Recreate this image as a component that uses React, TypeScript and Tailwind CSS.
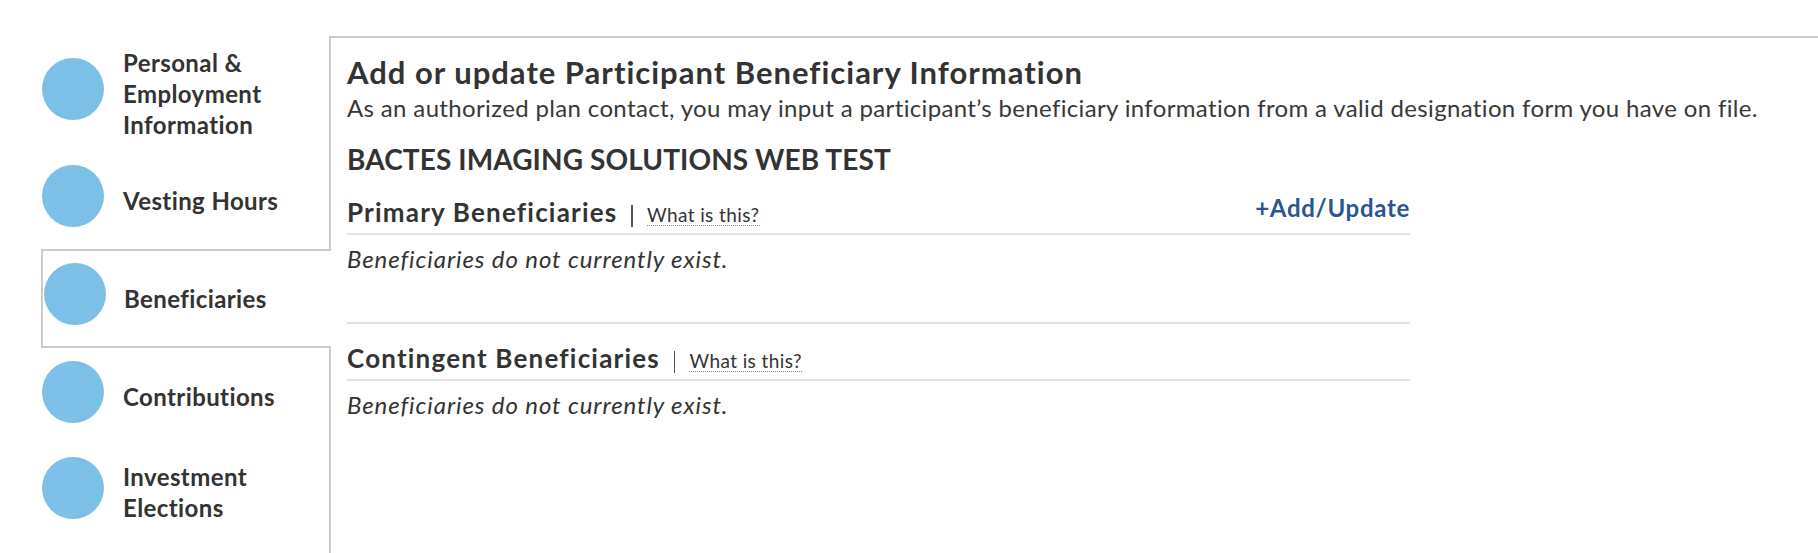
import React from "react";

function Circle({ extra = "" }: { extra?: string }) {
  return <div className={`w-[62px] h-[62px] rounded-full bg-[#7cc0e8] shrink-0 ${extra}`} />;
}

function SectionHeader({ title, showAdd }: { title: string; showAdd?: boolean }) {
  return (
    <div className="flex items-end justify-between pb-[6px] border-b-2 border-[#e2e2e2]">
      <div className="flex items-baseline">
        <h3 className="text-[26px] leading-[30px] font-bold tracking-[1.2px] text-[#333]">{title}</h3>
        <span className="mx-[14px] w-[1.5px] h-[22px] bg-[#555] self-end" />
        <span className="text-[19px] leading-[21px] tracking-[0.4px] text-[#333] border-b border-dotted border-[#888]">
          What is this?
        </span>
      </div>
      {showAdd && (
        <a className="mb-[4px] text-[24px] leading-[30px] font-bold tracking-[0.7px] text-[#2b5592]">
          +Add/Update
        </a>
      )}
    </div>
  );
}

export default function App() {
  return (
    <div className="flex h-screen w-full overflow-hidden bg-white font-[Lato,sans-serif] text-[#333]">
      <aside className="w-[329px] shrink-0 pt-[40px] flex flex-col tracking-[0.4px]">
        <div className="h-[98px] flex items-center pl-[42px] gap-[19px]">
          <Circle />
          <div className="mt-[8px] text-[24px] leading-[31px] font-bold">
            Personal &amp;
            <br />
            Employment
            <br />
            Information
          </div>
        </div>
        <div className="mt-[9px] h-[98px] flex items-center pl-[42px] gap-[19px]">
          <Circle />
          <div className="mt-[8px] text-[24px] leading-[31px] font-bold">Vesting Hours</div>
        </div>
        <div className="relative z-10 mt-[4px] ml-[41px] w-[290px] h-[99px] box-border border-2 border-r-0 border-[#ccc] bg-white flex items-center pl-[1px] gap-[18px]">
          <Circle extra="mb-[9px]" />
          <div className="text-[24px] leading-[31px] font-bold">Beneficiaries</div>
        </div>
        <div className="h-[88px] flex items-center pl-[42px] gap-[19px]">
          <Circle />
          <div className="mt-[8px] text-[24px] leading-[31px] font-bold">Contributions</div>
        </div>
        <div className="h-[104px] flex items-center pl-[42px] gap-[19px]">
          <Circle />
          <div className="mt-[8px] text-[24px] leading-[31px] font-bold">
            Investment
            <br />
            Elections
          </div>
        </div>
      </aside>
      <main className="flex-1 mt-[36px] border-t-2 border-l-2 border-[#ccc] pl-[16px] pt-[16px]">
        <h1 className="text-[31px] leading-[36px] font-bold tracking-[1px]">
          Add or update Participant Beneficiary Information
        </h1>
        <p className="mt-[4px] text-[24px] leading-[28px] tracking-[0.35px] text-[#383838] whitespace-nowrap">
          As an authorized plan contact, you may input a participant’s beneficiary information from a valid
          designation form you have on file.
        </p>
        <h2 className="mt-[20px] text-[28px] leading-[34px] font-bold tracking-[0.1px]">
          BACTES IMAGING SOLUTIONS WEB TEST
        </h2>
        <div className="w-[1063px]">
          <div className="mt-[17px]">
            <SectionHeader title="Primary Beneficiaries" showAdd />
            <div className="pt-[10px] pb-[49px] border-b-2 border-[#e2e2e2]">
              <p className="text-[24px] leading-[28px] italic tracking-[0.9px]">
                Beneficiaries do not currently exist.
              </p>
            </div>
          </div>
          <div className="mt-[19px]">
            <SectionHeader title="Contingent Beneficiaries" />
            <div className="pt-[10px]">
              <p className="text-[24px] leading-[28px] italic tracking-[0.9px]">
                Beneficiaries do not currently exist.
              </p>
            </div>
          </div>
        </div>
      </main>
    </div>
  );
}
